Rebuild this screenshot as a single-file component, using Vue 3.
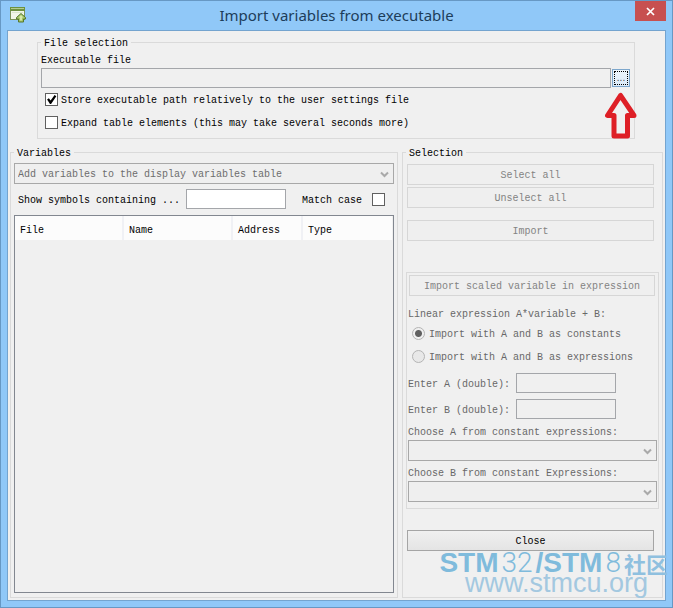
<script setup>
import { ref } from 'vue'

const storeRelative = ref(true)
const expandTables = ref(false)
const matchCase = ref(false)
const filter = ref('')
const mode = ref('constants')

const columns = [
  { name: 'File', size: 'wide' },
  { name: 'Name', size: 'wide' },
  { name: 'Address', size: 'narrow' },
  { name: 'Type', size: 'rest' },
]
</script>

<template>
  <div class="window">
    <header class="titlebar">
      <svg class="app-icon" width="18" height="18" viewBox="0 0 18 18" aria-hidden="true">
        <rect x="1.500" y="1.500" width="14" height="12" fill="#f1f6e8" stroke="#7c9459" />
        <rect x="1" y="1" width="15" height="4" fill="#6d9140" />
        <path d="M2 2.500h13" stroke="#b4cc92" />
        <path d="M3 6.500h11" fill="none" stroke="#dbe6cc" />
        <path d="M12 7.500l4.500 4v1.500h-2v3h-5v-3h-2v-1.500z" fill="#a3c465" stroke="#56782c" />
        <path d="M12 9l2.500 2.500h-1.500v3h-2v-3h-1.500z" fill="#d6e8a8" />
      </svg>
      <h1 class="title">Import variables from executable</h1>
      <button type="button" class="close-x" aria-label="Close window">
        <svg width="9" height="9" viewBox="0 0 9 9" aria-hidden="true">
          <path d="M1 1l7 7M8 1l-7 7" stroke="#fff" stroke-width="1.700" />
        </svg>
      </button>
    </header>

    <main class="client">
      <fieldset class="group file-group">
        <legend>File selection</legend>
        <label class="line" for="exe">Executable file</label>
        <div class="path-row">
          <input id="exe" class="field path" type="text" disabled />
          <button type="button" class="browse"><span>...</span></button>
          <svg class="arrow" width="32" height="48" viewBox="0 0 32 48" aria-hidden="true">
            <path
              d="M15.500 3.500L2.500 23.500h6.500V44h13.500V23.500h6.500z"
              fill="#f0f0f0"
              stroke="#de1f26"
              stroke-width="5"
              stroke-linejoin="round"
            />
          </svg>
        </div>
        <div class="checks">
          <label class="check">
            <input v-model="storeRelative" type="checkbox" />
            <span>Store executable path relatively to the user settings file</span>
          </label>
          <label class="check">
            <input v-model="expandTables" type="checkbox" />
            <span>Expand table elements (this may take several seconds more)</span>
          </label>
        </div>
      </fieldset>

      <div class="columns">
        <fieldset class="group variables">
          <legend>Variables</legend>
          <div class="combo">
            <select disabled aria-label="Target table">
              <option>Add variables to the display variables table</option>
            </select>
            <svg width="9" height="7" viewBox="0 0 9 7" aria-hidden="true">
              <path d="M1 1.500l3.500 3.500L8 1.500" fill="none" stroke="#a9a9a9" stroke-width="2" />
            </svg>
          </div>
          <div class="search">
            <label for="filter">Show symbols containing ...</label>
            <input id="filter" v-model="filter" class="field small" type="text" />
            <label for="case" class="case">Match case</label>
            <input id="case" v-model="matchCase" type="checkbox" />
          </div>
          <div class="table-box">
            <table>
              <thead>
                <tr>
                  <th v-for="c in columns" :key="c.name" :class="c.size" scope="col">{{ c.name }}</th>
                </tr>
              </thead>
            </table>
          </div>
        </fieldset>

        <fieldset class="group selection">
          <legend>Selection</legend>
          <div class="buttons">
            <button type="button" class="btn" disabled>Select all</button>
            <button type="button" class="btn" disabled>Unselect all</button>
            <button type="button" class="btn apart" disabled>Import</button>
          </div>

          <div class="scaled">
            <button type="button" class="btn" disabled>Import scaled variable in expression</button>
            <p class="line">Linear expression A*variable + B:</p>
            <div class="radios">
              <label class="check">
                <input v-model="mode" type="radio" name="mode" value="constants" disabled />
                <span>Import with A and B as constants</span>
              </label>
              <label class="check">
                <input v-model="mode" type="radio" name="mode" value="expressions" disabled />
                <span>Import with A and B as expressions</span>
              </label>
            </div>
            <div class="entries">
              <label for="a">Enter A (double):</label>
              <input id="a" class="field small" type="text" disabled />
              <label for="b">Enter B (double):</label>
              <input id="b" class="field small" type="text" disabled />
            </div>
            <div v-for="n in ['A', 'B']" :key="n" class="choose">
              <label class="line" :for="'choose' + n">
                Choose {{ n }} from constant {{ n === 'A' ? 'expressions' : 'Expressions' }}:
              </label>
              <div class="combo">
                <select :id="'choose' + n" disabled></select>
                <svg width="9" height="7" viewBox="0 0 9 7" aria-hidden="true">
                  <path d="M1 1.500l3.500 3.500L8 1.500" fill="none" stroke="#a9a9a9" stroke-width="2" />
                </svg>
              </div>
            </div>
          </div>

          <div class="buttons">
            <button type="button" class="btn active">Close</button>
          </div>
        </fieldset>
      </div>
    </main>

    <div class="watermark">
      <div class="brand"><b>STM</b><i>32</i><b>/STM</b><i>8</i><span class="cjk">社区</span></div>
      <div class="site">www.stmcu.org</div>
    </div>
  </div>
</template>

<style>
body {
  margin: 0;
}
</style>

<style scoped>
* {
  box-sizing: border-box;
}
.window {
  position: relative;
  display: flex;
  flex-direction: column;
  min-height: 100vh;
  padding: 0 6px 6px;
  border: 1px solid #6798c4;
  background: #90c8f8;
  color: #000;
  font: 10px/14px 'Liberation Mono', monospace;
}
input,
select,
button {
  margin: 0;
  font: inherit;
  color: inherit;
  border-radius: 0;
}
.titlebar {
  display: grid;
  grid-template-columns: 31px 1fr 31px;
  align-items: start;
  height: 29px;
}
.app-icon {
  margin: 5px 0 0 2px;
}
.title {
  margin: 0;
  text-align: center;
  font: 400 15px/29px 'Noto Sans', sans-serif;
  color: #1d3d5a;
}
.close-x {
  display: flex;
  align-items: center;
  justify-content: center;
  height: 20px;
  padding: 0;
  border: 0;
  background: #c75050;
}
.client {
  flex: 1;
  display: flex;
  flex-direction: column;
  gap: 7px;
  padding: 5px 2px 2px;
  border: 1px solid #74a4cf;
  background: #f0f0f0;
}
.group {
  min-width: 0;
  margin: 0;
  padding: 0 3px;
  border: 1px solid #dadada;
}
legend {
  padding: 3px 3px 0;
  line-height: 10px;
}
.line {
  display: block;
  margin: 0;
}
.file-group {
  margin: 0 28px 0 27px;
  padding: 5px 4px 9px 3px;
}
.path-row {
  position: relative;
  display: flex;
  align-items: center;
  gap: 1px;
}
.field {
  height: 20px;
  padding: 0 3px;
  border: 1px solid #a4a6aa;
  background: #fff;
}
.field:disabled {
  background: #f0f0f0;
}
.path {
  flex: 1;
  min-width: 0;
}
.small {
  width: 100px;
}
.browse {
  width: 18px;
  height: 18px;
  padding: 1px;
  border: 1px solid #7da7cc;
  background: linear-gradient(#eef5fc, #dcebf9);
}
.browse span {
  display: block;
  height: 14px;
  border: 1px dotted #000;
  font: 10px/12px 'Liberation Sans', sans-serif;
  color: #4c4c4c;
}
.arrow {
  position: absolute;
  right: -7px;
  top: 24px;
}
.checks {
  display: grid;
  gap: 10px;
  padding: 5px 0 0 4px;
}
.check {
  display: flex;
  align-items: center;
  gap: 3px;
  height: 13px;
}
.check span {
  padding-top: 2px;
}
input[type='checkbox'],
input[type='radio'] {
  appearance: none;
  flex: none;
  width: 13px;
  height: 13px;
  border: 1px solid #606060;
  background: #fff;
}
input[type='checkbox']:checked::before {
  content: '';
  display: block;
  width: 11px;
  height: 11px;
  background: #000;
  clip-path: polygon(10% 50%, 26% 38%, 42% 58%, 78% 8%, 94% 20%, 46% 92%, 36% 92%);
}
input[type='radio'] {
  border-color: #b4b4b4;
  border-radius: 50%;
  background: #e8e8e8;
}
input[type='radio']:checked {
  background: radial-gradient(circle, #606060 0 3px, #f0f0f0 4px);
}
.columns {
  flex: 1;
  display: grid;
  grid-template-columns: 388fr 261fr;
  gap: 4px;
}
.variables {
  display: flex;
  flex-direction: column;
  padding: 4px 3px;
}
.combo {
  position: relative;
  height: 21px;
}
.combo select {
  appearance: none;
  display: block;
  width: 100%;
  height: 21px;
  padding: 2px 3px 0;
  border: 1px solid #a8a8a8;
  background: #efefef;
  color: #6d6d6d;
  opacity: 1;
}
.combo svg {
  position: absolute;
  right: 5px;
  top: 8px;
}
.search {
  display: flex;
  align-items: center;
  padding: 5px 9px 6px 4px;
}
.search label {
  padding-top: 3px;
}
.search .small {
  margin-left: 6px;
}
.search .case {
  margin-left: auto;
  padding-right: 10px;
}
.table-box {
  flex: 1;
  padding-right: 1px;
  border: 1px solid #828790;
}
table {
  width: 100%;
  table-layout: fixed;
  border-spacing: 0;
}
th {
  height: 24px;
  padding: 5px 0 0 5px;
  border-right: 2px solid #f0f1f5;
  background: #fcfcfc;
  font-weight: 400;
  text-align: left;
}
th.rest {
  border-right: 0;
}
.wide {
  width: 109px;
}
.narrow {
  width: 70px;
}
.selection {
  padding-top: 5px;
}
.buttons {
  display: grid;
  gap: 2px;
  padding: 0 5px 0 1px;
}
.btn {
  display: block;
  width: 100%;
  height: 21px;
  padding: 2px 0 0;
  border: 1px solid #d6d6d6;
  background: #efefef;
  color: #838383;
  text-align: center;
}
.apart {
  margin-top: 10px;
}
.active {
  border-color: #a5a5a5;
  background: linear-gradient(#f0f0f0, #e4e4e4);
  color: #000;
}
.scaled {
  margin: 31px 0 21px;
  padding: 2px 1px 6px;
  border: 1px solid #dadada;
  color: #686868;
}
.scaled .btn {
  width: auto;
  margin: 0 2px 12px 1px;
  min-width: calc(100% - 3px);
}
.radios {
  display: grid;
  gap: 10px;
  padding: 5px 0 10px 4px;
}
.radios .check {
  gap: 4px;
}
.entries {
  display: grid;
  grid-template-columns: 102px 100px;
  column-gap: 6px;
  row-gap: 6px;
  align-items: center;
  margin-bottom: 7px;
}
.entries label {
  padding-top: 3px;
  white-space: nowrap;
}
.choose + .choose {
  margin-top: 6px;
}
.watermark {
  position: absolute;
  right: 4px;
  bottom: 14px;
  color: #7fbbdc;
  pointer-events: none;
  white-space: nowrap;
}
.brand {
  display: flex;
  align-items: center;
  gap: 3px;
  font: 28px/20px 'Liberation Sans', sans-serif;
}
.brand i {
  font-family: Roboto, sans-serif;
  font-style: normal;
  font-weight: 300;
}
.cjk {
  font: 700 22px/18px 'Noto Sans CJK SC', sans-serif;
  color: #8fc0df;
}
.site {
  padding-right: 20px;
  text-align: right;
  font: 27px/20px 'Liberation Sans', sans-serif;
  color: #a3c8e0;
}
</style>
